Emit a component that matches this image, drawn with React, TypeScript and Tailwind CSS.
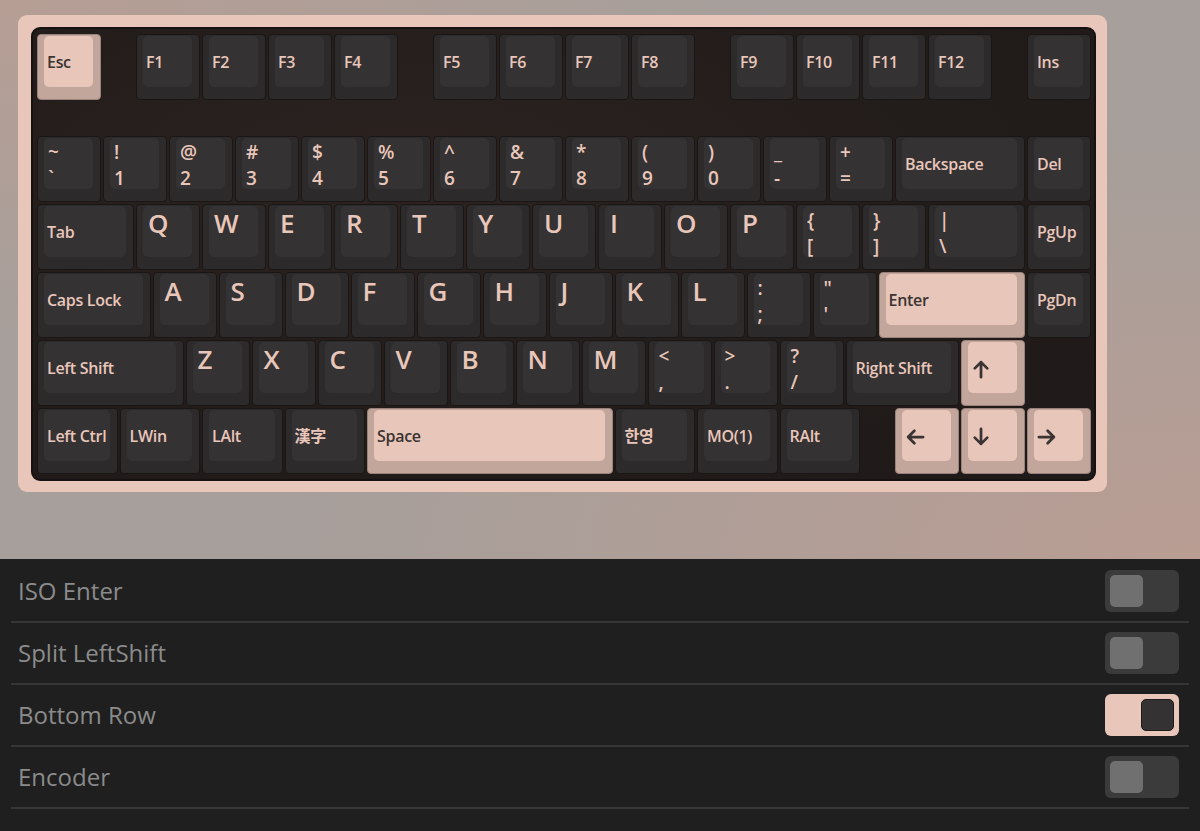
import React from "react";

type Kind = "name" | "letter" | "dual" | "arrow";
type K = { l: string; s?: string; w?: number; t?: Kind; pink?: boolean; gap?: number };

const U = 66;

const name = (l: string, w = 1, pink = false, gap = 0): K => ({ l, w, t: "name", pink, gap });
const letter = (l: string, gap = 0): K => ({ l, t: "letter", gap });
const dual = (s: string, l: string): K => ({ l, s, t: "dual" });
const arrow = (l: string, gap = 0): K => ({ l, t: "arrow", pink: true, gap });

const rows: K[][] = [
  [
    name("Esc", 1, true),
    name("F1", 1, false, 0.5),
    name("F2"),
    name("F3"),
    name("F4"),
    name("F5", 1, false, 0.5),
    name("F6"),
    name("F7"),
    name("F8"),
    name("F9", 1, false, 0.5),
    name("F10"),
    name("F11"),
    name("F12"),
    name("Ins", 1, false, 0.5),
  ],
  [
    dual("~", "`"),
    dual("!", "1"),
    dual("@", "2"),
    dual("#", "3"),
    dual("$", "4"),
    dual("%", "5"),
    dual("^", "6"),
    dual("&", "7"),
    dual("*", "8"),
    dual("(", "9"),
    dual(")", "0"),
    dual("_", "-"),
    dual("+", "="),
    name("Backspace", 2),
    name("Del"),
  ],
  [
    name("Tab", 1.5),
    ...["Q", "W", "E", "R", "T", "Y", "U", "I", "O", "P"].map((c) => letter(c)),
    dual("{", "["),
    dual("}", "]"),
    { ...dual("|", "\\"), w: 1.5 },
    name("PgUp"),
  ],
  [
    name("Caps Lock", 1.75),
    ...["A", "S", "D", "F", "G", "H", "J", "K", "L"].map((c) => letter(c)),
    dual(":", ";"),
    dual('"', "'"),
    name("Enter", 2.25, true),
    name("PgDn"),
  ],
  [
    name("Left Shift", 2.25),
    ...["Z", "X", "C", "V", "B", "N", "M"].map((c) => letter(c)),
    dual("<", ","),
    dual(">", "."),
    dual("?", "/"),
    name("Right Shift", 1.75),
    arrow("up"),
  ],
  [
    name("Left Ctrl", 1.25),
    name("LWin", 1.25),
    name("LAlt", 1.25),
    name("漢字", 1.25),
    name("Space", 3.75, true),
    name("한영", 1.25),
    name("MO(1)", 1.25),
    name("RAlt", 1.25),
    arrow("left", 0.5),
    arrow("down"),
    arrow("right"),
  ],
];

function Arrow({ dir }: { dir: string }) {
  const paths: Record<string, string> = {
    up: "M8 14.5V2.5M3 7.5l5-5 5 5",
    down: "M8 1.5v12M3 8.5l5 5 5-5",
    left: "M14.5 8h-12M7.5 3l-5 5 5 5",
    right: "M1.5 8h12M8.5 3l5 5-5 5",
  };
  return (
    <svg width="20" height="20" viewBox="0 0 16 16" fill="none" stroke="#3a3432" strokeWidth="2.2" strokeLinecap="round" strokeLinejoin="round">
      <path d={paths[dir]} />
    </svg>
  );
}

function Legend({ k }: { k: K }) {
  if (k.t === "letter")
    return <div className="pl-[5px] pt-[4px] text-[26px] font-semibold leading-none">{k.l}</div>;
  if (k.t === "dual")
    return (
      <div className="flex h-full flex-col justify-between pl-[4px] pt-[3px] text-[19px] font-semibold leading-[22px]">
        <span>{k.s}</span>
        <span>{k.l}</span>
      </div>
    );
  if (k.t === "arrow")
    return (
      <div className="flex h-full items-center pl-[3px] pt-[3px]">
        <Arrow dir={k.l} />
      </div>
    );
  return (
    <div className="flex h-full items-center whitespace-nowrap pl-[3px] text-[16px] font-semibold tracking-[-0.3px]">
      {k.l}
    </div>
  );
}

function Key({ k }: { k: K }) {
  const w = k.w ?? 1;
  return (
    <>
      {k.gap ? <div className="shrink-0" style={{ width: k.gap * U }} /> : null}
      <div className="h-[68px] shrink-0 p-px" style={{ width: w * U }}>
        <div
          className={
            k.pink
              ? "h-full rounded-[4px] border border-[#9a827a] bg-[#c2a69c] pt-px pl-[6px] pr-[7px] pb-[12px]"
              : "h-full rounded-[4px] border border-[#1a1615] bg-[#2c2a2a] pt-px pl-[6px] pr-[7px] pb-[12px]"
          }
        >
          <div
            className={
              k.pink
                ? "h-full rounded-[5px] bg-[#e9c6ba] text-[#3a3432]"
                : "h-full rounded-[5px] bg-[#343232] text-[#e9c6ba]"
            }
          >
            <Legend k={k} />
          </div>
        </div>
      </div>
    </>
  );
}

function Toggle({ on }: { on?: boolean }) {
  return on ? (
    <div className="flex h-[42px] w-[74px] items-center justify-end rounded-[6px] bg-[#e9c6ba] pr-[5px]">
      <div className="h-[32px] w-[33px] rounded-[5px] border border-[#1e1c1c] bg-[#343232]" />
    </div>
  ) : (
    <div className="flex h-[42px] w-[74px] items-center rounded-[6px] bg-[#3b3b3b] pl-[5px]">
      <div className="h-[32px] w-[33px] rounded-[5px] bg-[#707070]" />
    </div>
  );
}

const settings: [string, boolean][] = [
  ["ISO Enter", false],
  ["Split LeftShift", false],
  ["Bottom Row", true],
  ["Encoder", false],
];

export default function App() {
  return (
    <div className="h-[831px] w-[1200px] overflow-hidden font-['Open_Sans','Noto_Sans_CJK_KR',sans-serif]">
      <div className="h-[559px] bg-[#a69f9b] bg-[radial-gradient(ellipse_at_top_left,#b69e94_0%,rgba(182,158,148,0)_45%),radial-gradient(ellipse_at_bottom_right,#b99d93_0%,rgba(185,157,147,0)_55%)] pt-[15px] pl-[18px]">
        <div className="w-[1089px] rounded-[9px] bg-[#e9c6ba] pt-[12px] pl-[13px] pr-[11px] pb-[11px]">
          <div className="rounded-[9px] border-2 border-[#161211] bg-[#211c1a] bg-[radial-gradient(ellipse_at_35%_35%,#2c2320_0%,#221c1a_55%,#1e1a19_100%)] pt-[4px] pl-[3px] pr-[2px] pb-[4px]">
            {rows.map((r, i) => (
              <React.Fragment key={i}>
                <div className="flex h-[68px]">
                  {r.map((k, j) => (
                    <Key key={j} k={k} />
                  ))}
                </div>
                {i === 0 ? <div className="h-[34px]" /> : null}
              </React.Fragment>
            ))}
          </div>
        </div>
      </div>
      <div className="h-[272px] bg-[#1f1f1f] pt-[2px]">
        {settings.map(([label, on]) => (
          <div
            key={label}
            className="mx-[11px] flex h-[62px] items-center justify-between border-b-2 border-[#363636] pl-[7px] pr-[10px]"
          >
            <span className="text-[24px] text-[#8b8b8b]">{label}</span>
            <Toggle on={on} />
          </div>
        ))}
      </div>
    </div>
  );
}
